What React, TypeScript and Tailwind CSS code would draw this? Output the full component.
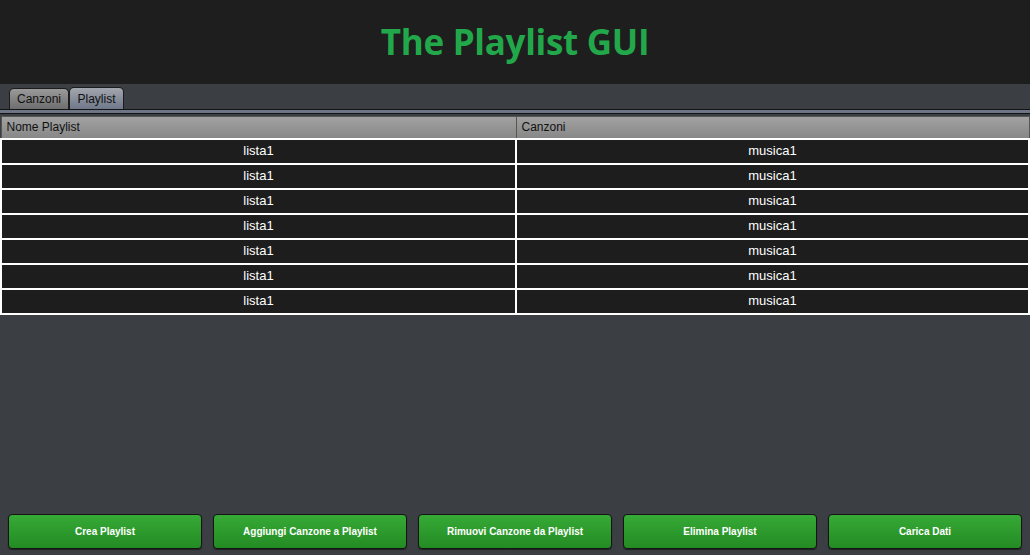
import React from 'react';

const rows = Array.from({ length: 7 }, () => ({ nome: 'lista1', canzoni: 'musica1' }));

const buttons = [
  'Crea Playlist',
  'Aggiungi Canzone a Playlist',
  'Rimuovi Canzone da Playlist',
  'Elimina Playlist',
  'Carica Dati',
];

export default function App() {
  return (
    <div className="flex h-[555px] w-[1030px] flex-col overflow-hidden bg-[#3b3e42] font-['Liberation_Sans',Arial,sans-serif]">
      {/* Header */}
      <div className="flex h-[84px] shrink-0 items-center justify-center bg-[#1e1e1e]">
        <h1 className="font-['Open_Sans',sans-serif] text-[35px] font-bold tracking-[-0.3px] text-[#22a84a]">
          The Playlist GUI
        </h1>
      </div>

      {/* Tabs */}
      <div className="flex h-[25px] items-end pl-[9px]">
        <div className="flex h-[21px] w-[60px] items-center justify-center rounded-t-[5px] border border-b-0 border-[#1c1c1c] bg-gradient-to-b from-[#9a9a9a] to-[#6e6e6e] text-[12px] text-[#111]">
          Canzoni
        </div>
        <div className="flex h-[22px] w-[55px] items-center justify-center rounded-t-[5px] border border-b-0 border-[#1c1c1c] bg-gradient-to-b from-[#a3a6ae] to-[#6f788a] text-[12px] text-[#111]">
          Playlist
        </div>
      </div>
      <div className="h-[5px] border-y border-[#141414] bg-[#6d7587]" />

      {/* Table */}
      <div className="mt-[2px]">
        <table className="w-full border-collapse text-[13px]">
          <thead>
            <tr className="h-[22px] bg-gradient-to-b from-[#a2a2a2] to-[#868686] text-[12px] text-[#111]">
              <th className="w-[515px] border border-[#555] pl-[5px] text-left font-normal">Nome Playlist</th>
              <th className="border border-[#555] pl-[5px] text-left font-normal">Canzoni</th>
            </tr>
          </thead>
          <tbody>
            {rows.map((r, i) => (
              <tr key={i} className="h-[25px] bg-[#1d1d1d] text-white">
                <td className="border-2 border-white text-center">{r.nome}</td>
                <td className="border-2 border-white text-center">{r.canzoni}</td>
              </tr>
            ))}
          </tbody>
        </table>
      </div>

      <div className="flex-1" />

      {/* Buttons */}
      <div className="flex gap-[11px] px-[8px] pb-[6px]">
        {buttons.map((b) => (
          <button
            key={b}
            className="h-[35px] w-[194px] rounded-[4px] border border-[#151515] bg-gradient-to-b from-[#36aa36] to-[#238b23] text-[10px] font-bold text-white shadow-[0_1px_1px_rgba(0,0,0,0.5)]"
          >
            {b}
          </button>
        ))}
      </div>
    </div>
  );
}
